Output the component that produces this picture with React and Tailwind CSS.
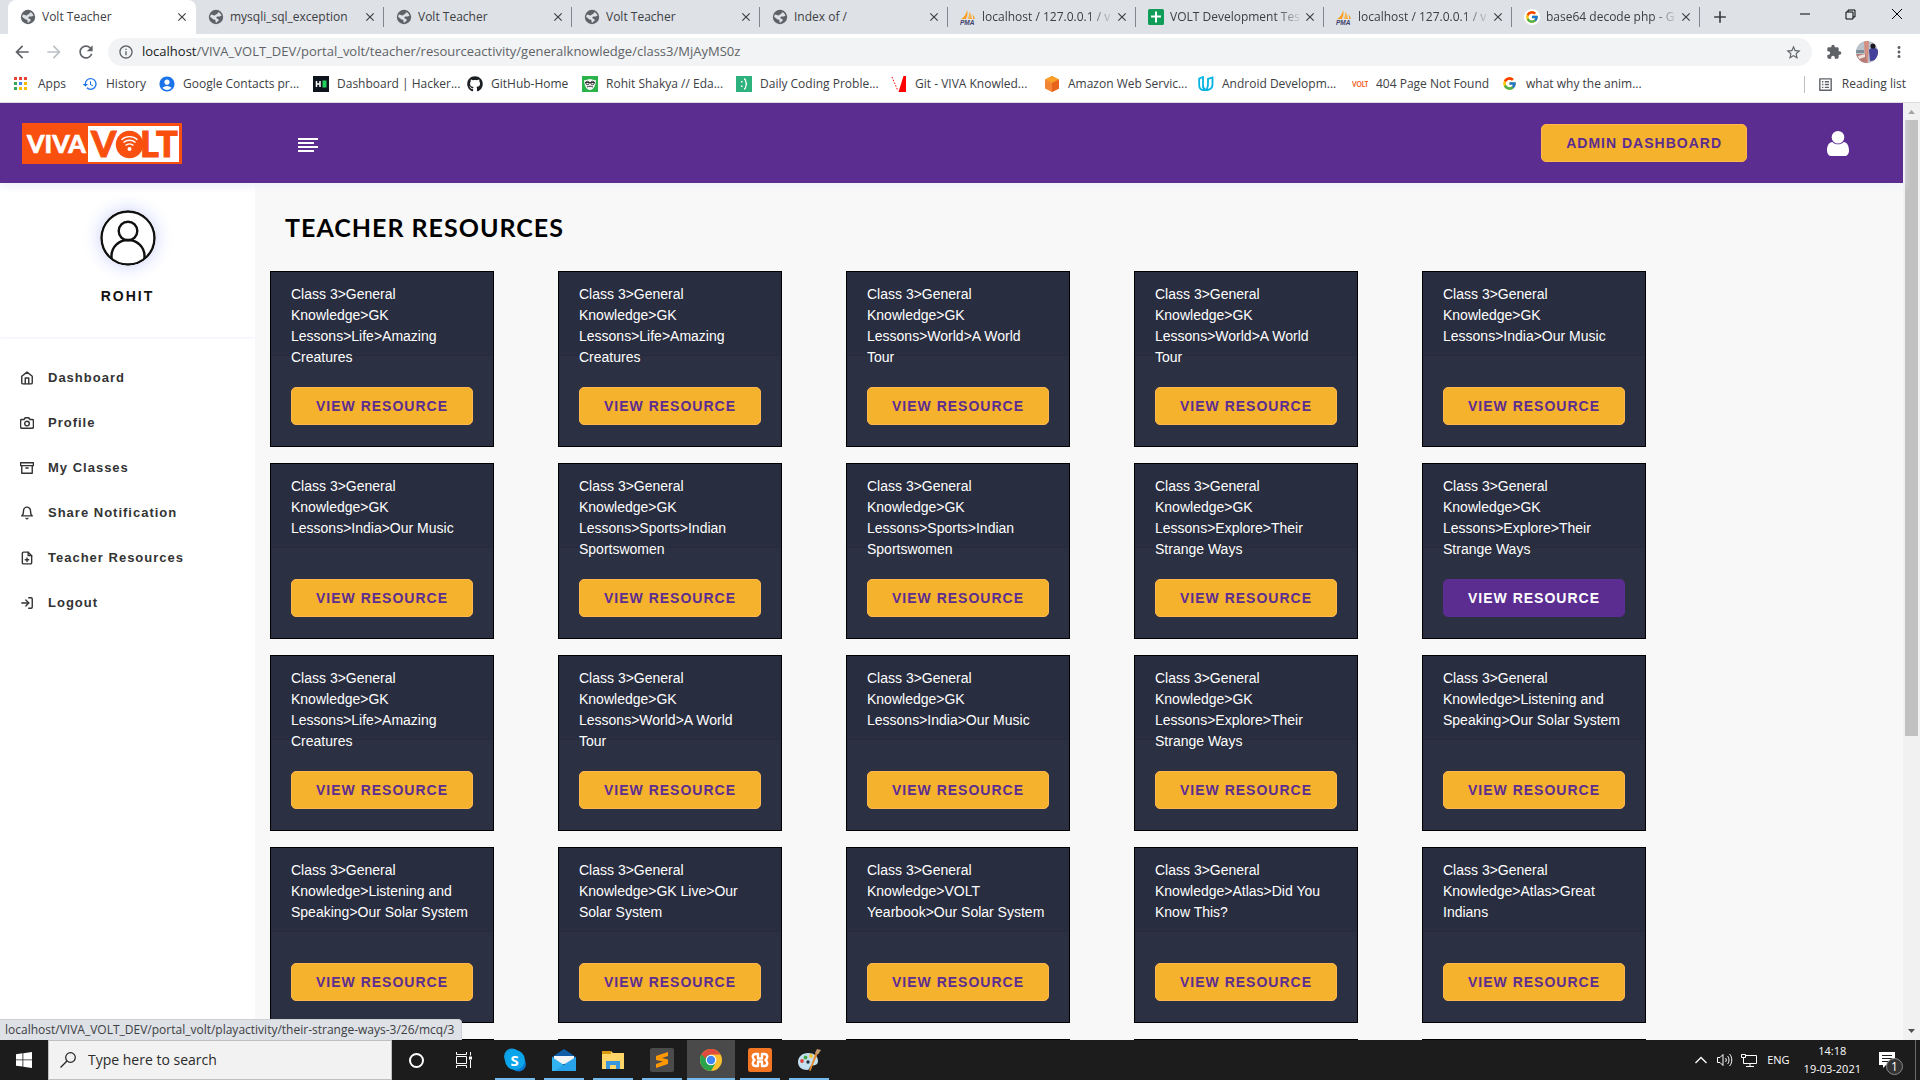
import React from "react";
import {
  MdArrowBack, MdArrowForward, MdRefresh, MdInfoOutline, MdStarBorder, MdExtension,
  MdMoreVert, MdHistory, MdListAlt, MdClose, MdAdd, MdAccountCircle,
} from "react-icons/md";
import { FaGithub } from "react-icons/fa";
import { FcGoogle } from "react-icons/fc";
import { FiHome, FiCamera, FiArchive, FiBell, FiFilePlus, FiLogIn } from "react-icons/fi";

const UI = "font-['Open_Sans','Noto_Sans',sans-serif]";

const Globe = () => (
  <svg viewBox="0 0 16 16" className="size-4 shrink-0">
    <circle cx="8" cy="8" r="7.2" fill="#5f6368" />
    <path d="M3 5.5c1.2-.3 2 .9 3.300.9 1 0 1.200-1 2.200-1.200 1-.2 1-1.600 2-2 1.400.6 2.700 1.900 3 3.600-1 .2-1.800.9-2.900.8-1.200-.2-2.200.2-2.200 1.100 0 1.200 1.600 1 2.200 1.700.5.700-.3 1.700-1.100 2.100-.5.300-.7 1-1.300 1.200-1-.3-.700-1.700-.6-2.500-.9-.7-2.600-.6-3.400-1.600C3.600 8.600 2.200 8.300 2.100 7.400z" fill="#dee1e6" />
  </svg>
);

const Pma = () => (
  <svg viewBox="0 0 16 16" className="size-4 shrink-0">
    <path d="M7 1c1 3 .5 6.500-1.200 9H1C4 8.500 6.300 5 7 1z" fill="#f7a01e" />
    <path d="M9 2.500c2 2.500 3 5 3 7.500H7.500C9 7.500 9.500 5 9 2.500z" fill="#f9b24a" />
    <path d="M12.500 5c1.200 1.600 2 3.200 2.300 5H13c.2-1.700 0-3.300-.5-5z" fill="#f7a01e" />
    <text x="0" y="15.600" fontSize="6.500" fontWeight="700" fontStyle="italic" fontFamily="Liberation Sans, sans-serif" fill="#3c3f6b">PMA</text>
  </svg>
);

const Sheet = () => (
  <svg viewBox="0 0 16 16" className="size-4 shrink-0">
    <rect width="16" height="16" rx="1.500" fill="#0f9d58" />
    <path d="M7 2.500h2v4h4v2H9v5H7v-5H3v-2h4z" fill="#fff" />
  </svg>
);

const GoogleRound = () => (
  <span className="flex size-4 shrink-0 items-center justify-center rounded-full bg-white"><FcGoogle size={14} /></span>
);

const tabs = [
  { title: "Volt Teacher", icon: Globe, active: true },
  { title: "mysqli_sql_exception", icon: Globe },
  { title: "Volt Teacher", icon: Globe },
  { title: "Volt Teacher", icon: Globe },
  { title: "Index of /", icon: Globe },
  { title: "localhost / 127.0.0.1 / v", icon: Pma, fade: true },
  { title: "VOLT Development Tes", icon: Sheet, fade: true },
  { title: "localhost / 127.0.0.1 / v", icon: Pma, fade: true },
  { title: "base64 decode php - G", icon: GoogleRound, fade: true },
];

function TabStrip() {
  return (
    <div className="flex h-[34px] bg-[#dee1e6] pl-2">
      {tabs.map((t, i) => (
        <div key={i} className={"flex min-w-0 basis-[188px] items-center " + (t.active ? "rounded-t-lg bg-white" : "")}>
          <div className="flex min-w-0 flex-1 items-center pr-1.5 pl-3">
            <t.icon />
            <span className={"ml-1.5 flex-1 overflow-hidden text-xs whitespace-nowrap text-[#3c4043] " + (t.fade ? "[mask-image:linear-gradient(to_right,black_80%,transparent)]" : "")}>{t.title}</span>
            <button aria-label="Close tab" className="text-[#3c4043]"><MdClose size={14} /></button>
          </div>
          <span className={"h-5 w-px " + (i > 0 ? "bg-[#80868b]" : "")} />
        </div>
      ))}
      <button aria-label="New tab" className="px-2.5 text-[#3c4043]"><MdAdd size={20} /></button>
      <div className="ml-auto flex text-black">
        {["M1 6h10", "M1 4h7v7H1zM3 4V2h7v7H8", "M1 1l10 10M11 1L1 11"].map((d, i) => (
          <button key={d} aria-label={["Minimise", "Restore", "Close window"][i]} className="flex h-7 w-[46px] items-center justify-center">
            <svg viewBox="0 0 12 12" className="size-3" fill="none" stroke="currentColor"><path d={d} /></svg>
          </button>
        ))}
      </div>
    </div>
  );
}

function AddressBar() {
  return (
    <div className="flex h-9 items-center bg-white text-[#5f6368]">
      <button aria-label="Back" className="ml-3"><MdArrowBack size={20} /></button>
      <button aria-label="Forward" className="ml-3 text-[#bdc1c6]"><MdArrowForward size={20} /></button>
      <button aria-label="Reload" className="ml-3"><MdRefresh size={20} /></button>
      <div className="ml-3 flex h-7 flex-1 items-center rounded-full bg-[#f1f3f4] px-2.5">
        <MdInfoOutline size={16} />
        <span className="ml-2 flex-1 text-[13px] whitespace-nowrap"><span className="text-[#202124]">localhost</span>/VIVA_VOLT_DEV/portal_volt/teacher/resourceactivity/generalknowledge/class3/MjAyMS0z</span>
        <MdStarBorder size={17} />
      </div>
      <button aria-label="Extensions" className="ml-3.5"><MdExtension size={16} /></button>
      <svg viewBox="0 0 22 22" className="ml-3.5 size-[22px]" role="img" aria-label="Account">
        <defs><clipPath id="face"><circle cx="11" cy="11" r="11" /></clipPath></defs>
        <g clipPath="url(#face)">
          <rect width="22" height="22" fill="#b9c3cb" />
          <path d="M8 0h5l-1 22H9z" fill="#d58f80" />
          <path d="M0 9h8v3H0z" fill="#7f8d96" />
          <path d="M0 13h10l1 9H0z" fill="#b77c78" />
          <path d="M2 15l7-2v3l-6 2z" fill="#eee5e0" />
          <path d="M13 9c2-3 6-3 9 0v10l-8 1z" fill="#45409a" />
          <circle cx="17" cy="5" r="2.600" fill="#1d1720" />
        </g>
      </svg>
      <button aria-label="Menu" className="mr-3 ml-3"><MdMoreVert size={18} /></button>
    </div>
  );
}

const AppsGrid = () => (
  <svg viewBox="0 0 14 14" className="size-3.5">
    {["#ea4335", "#ea4335", "#ea4335", "#34a853", "#4285f4", "#fbbc04", "#34a853", "#fbbc04", "#fbbc04"].map((c, i) => (
      <rect key={i} x={(i % 3) * 5} y={Math.floor(i / 3) * 5 + 1} width="3" height="3" fill={c} />
    ))}
  </svg>
);

const bookmarks = [
  { t: "Apps", w: "w-[68px]", i: <AppsGrid /> },
  { t: "History", w: "w-[77px]", i: <MdHistory size={16} className="text-[#1a73e8]" /> },
  { t: "Google Contacts pr...", w: "w-[154px]", i: <MdAccountCircle size={18} className="-m-px text-[#1a73e8]" /> },
  { t: "Dashboard | Hacker...", w: "w-[154px]", i: (
    <svg viewBox="0 0 16 16"><path fill="#0e141e" d="M0 0h16v16H0z" /><path d="M3.500 5v6M7 5v6M3.500 8H7" stroke="#fff" strokeWidth="1.500" /><path fill="#1fd35c" d="M9.500 4.500h4v7h-4z" /></svg>) },
  { t: "GitHub-Home", w: "w-[115px]", i: <FaGithub size={16} className="text-[#1b1f23]" /> },
  { t: "Rohit Shakya // Eda...", w: "w-[154px]", i: (
    <svg viewBox="0 0 16 16"><path fill="#2bb34b" d="M0 0h16v16H0z" /><path d="M2 4c2 1 3-1 6-1s4 2 6 1c0 4-2 10-6 10S2 8 2 4z" fill="#f4f4f4" /><path d="M3 6.500h10" stroke="#333" /><circle cx="5.500" cy="7" r="1.700" fill="none" stroke="#333" /><circle cx="10.500" cy="7" r="1.700" fill="none" stroke="#333" /><path d="M5 11c2-1 4-1 6 0" stroke="#333" fill="none" /></svg>) },
  { t: "Daily Coding Proble...", w: "w-[155px]", i: (
    <svg viewBox="0 0 16 16"><path fill="#2db27e" d="M0 0h16v16H0z" /><path d="M8 3c3 0 .5 4.500 3 5-2.500.5 0 5-3 5" fill="none" stroke="#fff" strokeWidth="1.300" /><path fill="#fff" d="M5 5h1.500v1.500H5zM5 9.500h1.500V11H5z" /></svg>) },
  { t: "Git - VIVA Knowled...", w: "w-[153px]", i: (
    <svg viewBox="0 0 16 16"><path d="M1 1l6 14" stroke="#f00" strokeDasharray="1.500 1.500" /><path d="M12.500 0H15v16H7.500z" fill="#f00" /></svg>) },
  { t: "Amazon Web Servic...", w: "w-[154px]", i: (
    <svg viewBox="0 0 16 16"><path d="M8 0l7 3.500v9L8 16l-7-3.500v-9z" fill="#f58536" /><path d="M8 0l7 3.500L8 7 1 3.500z" fill="#fa9f2a" /><path d="M8 7l7-3.500v9L8 16z" fill="#e8641b" /></svg>) },
  { t: "Android Developm...", w: "w-[154px]", i: (
    <svg viewBox="0 0 16 16" fill="none" stroke="#02b3e4" strokeWidth="1.800"><path d="M1.200 2.500L5 1v8.500c0 2 .8 3.500 2 4.500-3.500.5-5.800-1-5.800-4.500z" /><path d="M5 9.500c0 3 2 5 4.500 4.500 3-.6 5-2 5-5.500V1.500L10 3v5c0 3-.5 5-3 6" /></svg>) },
  { t: "404 Page Not Found", w: "w-[150px]", i: (
    <svg viewBox="0 0 16 16"><text x="0" y="10.500" fontSize="6.500" fontWeight="900" fontFamily="Lato, sans-serif" fill="#f4662a">VOLT</text></svg>) },
  { t: "what why the anim...", w: "w-[150px]", i: <FcGoogle size={15} /> },
];

function Bookmarks() {
  return (
    <nav aria-label="Bookmarks" className="flex h-[33px] items-center border-b border-[#dadce0] bg-white pb-1 pl-3.5 text-xs text-[#3c4043]">
      {bookmarks.map((b) => (
        <a key={b.t} href="#" className={"flex shrink-0 items-center gap-2 whitespace-nowrap " + b.w}>
          <span className="size-4 shrink-0 [&>svg]:max-w-none">{b.i}</span>
          {b.t}
        </a>
      ))}
      <button className="mr-3.5 ml-auto flex items-center gap-2 border-l border-[#bdc1c6] pl-3 whitespace-nowrap">
        <MdListAlt size={17} className="text-[#5f6368]" />
        Reading list
      </button>
    </nav>
  );
}

const Logo = () => (
  <svg viewBox="0 0 160 41" className="h-[41px] w-40" role="img" aria-label="Viva Volt">
    <rect width="160" height="41" fill="#f95010" />
    <rect x="66" y="3" width="91" height="36" fill="#fff" />
    <g fontFamily="Lato, sans-serif" fontWeight="900">
      <text x="5" y="30" fontSize="25" fill="#fff" stroke="#fff" strokeWidth=".6">VIVA</text>
      <g fontSize="36" fill="#f95010" stroke="#f95010">
        <text x="69" y="34">V</text>
        <text x="118" y="34">L</text>
        <text x="134" y="34">T</text>
      </g>
    </g>
    <circle cx="107.500" cy="21.500" r="13.700" fill="#f95010" />
    <circle cx="107.500" cy="26" r="2" fill="#fff" />
    <path d="M103.500 22.500a6 6 0 0 1 8 0M101.500 19.500a9 9 0 0 1 12 0M99.500 16.700a12 12 0 0 1 16 0" fill="none" stroke="#fff" strokeWidth="1.400" />
  </svg>
);

function Header() {
  return (
    <header className="z-10 flex h-20 shrink-0 items-center bg-[#5c2d91] shadow-[0_4px_8px_#eef1f9]">
      <div className="w-[298px] pl-[22px]"><Logo /></div>
      <button aria-label="Toggle menu" className="mt-1 flex flex-col gap-0.5">
        <span className="h-0.5 w-5 bg-white" /><span className="h-0.5 w-4 bg-white" />
        <span className="h-0.5 w-5 bg-white" /><span className="h-0.5 w-4 bg-white" />
      </button>
      <button className="mr-20 ml-auto h-[38px] rounded-[5px] border border-[#ffb84d] bg-[#f5b22c] px-6 text-sm font-bold tracking-[1px] text-[#5c2d91]">ADMIN DASHBOARD</button>
      <button aria-label="Account" className="mr-[54px]">
        <svg viewBox="0 0 22 25" className="h-[25px] w-[22px]" fill="#fff">
          <path d="M5.300 11C2 11.500 0 14.500 0 19.500 0 23 1.800 25 4.500 25h13c2.700 0 4.500-2 4.500-5.500 0-5-2-8-5.300-8.500-1.500 1.500-3.400 2.300-5.700 2.300S6.800 12.500 5.300 11z" />
          <circle cx="11" cy="6.300" r="6.300" />
        </svg>
      </button>
    </header>
  );
}

const menu = [
  [FiHome, "Dashboard"], [FiCamera, "Profile"], [FiArchive, "My Classes"],
  [FiBell, "Share Notification"], [FiFilePlus, "Teacher Resources"], [FiLogIn, "Logout"],
];

function Sidebar() {
  return (
    <aside className="w-[255px] shrink-0 bg-white shadow-[4px_0_8px_#eef1f9]">
      <div className="flex h-[154px] flex-col items-center pt-[27px] shadow-[0_1px_3px_#eef1f9]">
        <svg viewBox="0 0 56 56" className="size-14 rounded-full bg-white shadow-[0_0_18px_#c9cffb]" fill="none" stroke="#111" strokeWidth="2.400">
          <circle cx="28" cy="28" r="26.500" />
          <circle cx="28" cy="21" r="9.300" />
          <path d="M11.500 48.500V46c0-9 7.300-16 16.500-16s16.500 7 16.500 16v2.500" />
        </svg>
        <p className="mt-5 text-sm font-bold tracking-[2px] text-[#111]">ROHIT</p>
      </div>
      <nav className="mt-[18px] text-[13px] font-bold tracking-[1px] text-[#333]">
        {menu.map(([Icon, label]) => (
          <a key={label} href="#" className="flex h-[45px] items-center gap-3.5 pl-5">
            <Icon size={14} strokeWidth={2.400} />
            {label}
          </a>
        ))}
      </nav>
    </aside>
  );
}

const G = "Class 3>General Knowledge>";
const cards = [
  "GK Lessons>Life>Amazing Creatures", "GK Lessons>Life>Amazing Creatures", "GK Lessons>World>A World Tour", "GK Lessons>World>A World Tour", "GK Lessons>India>Our Music",
  "GK Lessons>India>Our Music", "GK Lessons>Sports>Indian Sportswomen", "GK Lessons>Sports>Indian Sportswomen", "GK Lessons>Explore>Their Strange Ways", "GK Lessons>Explore>Their Strange Ways",
  "GK Lessons>Life>Amazing Creatures", "GK Lessons>World>A World Tour", "GK Lessons>India>Our Music", "GK Lessons>Explore>Their Strange Ways", "Listening and Speaking>Our Solar System",
  "Listening and Speaking>Our Solar System", "GK Live>Our Solar System", "VOLT Yearbook>Our Solar System", "Atlas>Did You Know This?", "Atlas>Great Indians",
  "Atlas>Great Indians", "Atlas>Great Indians", "Atlas>Great Indians", "Atlas>Great Indians", "Atlas>Great Indians",
];

function Card({ text, active }) {
  return (
    <article className="flex h-44 w-56 flex-col border border-black bg-[#2b3042]">
      <h2 className="h-[84px] border-b border-[#262a3a] bg-[#292d40] px-5 pt-3 text-sm leading-[21px] text-white">{text}</h2>
      <div className="px-5 pt-[31px]">
        <button className={"h-[38px] w-full rounded-[5px] border text-sm font-bold tracking-[1px] " + (active ? "border-[#5c2d91] bg-[#5c2d91] text-white" : "border-[#ffb84d] bg-[#f5b22c] text-[#5c2d91]")}>VIEW RESOURCE</button>
      </div>
    </article>
  );
}

function Page() {
  return (
    <div className="relative flex min-h-0 flex-1 overflow-hidden font-['Liberation_Sans',Arial,sans-serif]">
      <div className="flex min-w-0 flex-1 flex-col">
        <Header />
        <div className="flex min-h-0 flex-1">
          <Sidebar />
          <main className="min-w-0 flex-1 overflow-hidden bg-[#f8f8f8] px-[15px]">
            <h1 className="mt-7 mb-7 pl-[15px] text-[25px] leading-8 font-bold tracking-[1px] text-black font-['Lato',sans-serif]">TEACHER RESOURCES</h1>
            <div className="flex flex-wrap gap-x-16 gap-y-4">
              {cards.map((c, i) => <Card key={i} text={G + c} active={i === 9} />)}
            </div>
          </main>
        </div>
      </div>
      <div className="flex w-[17px] flex-col items-center bg-[#f1f1f1]" aria-hidden="true">
        <svg viewBox="0 0 17 17" className="size-[17px] shrink-0"><path d="M5 11l3.500-4 3.500 4z" fill="#a3a3a3" /></svg>
        <div className="h-[616px] w-[13px] bg-[#c1c1c1]" />
        <svg viewBox="0 0 17 17" className="mt-auto size-[17px] shrink-0"><path d="M5 6l3.500 4L12 6z" fill="#505050" /></svg>
      </div>
      <div className="absolute bottom-0 left-0 z-20 flex h-[21px] items-center rounded-tr border-t border-r border-[#ced1d6] bg-[#dee1e6] pr-[7px] pl-[5px] text-xs whitespace-nowrap text-[#3c4043] font-['Open_Sans',sans-serif]">
        localhost/VIVA_VOLT_DEV/portal_volt/playactivity/their-strange-ways-3/26/mcq/3
      </div>
    </div>
  );
}

const taskApps = [
  { n: "Skype", d: <><circle cx="9" cy="8.500" r="8" fill="#0c9fe4" /><circle cx="15.500" cy="16" r="7.500" fill="#0a78d0" /><circle cx="12" cy="12" r="10" fill="#0aa5ea" /><text x="7.500" y="17.500" fontSize="15" fontWeight="700" fontFamily="Open Sans, sans-serif" fill="#fff">S</text></> },
  { n: "Mail", d: <><path d="M0 9L12 1l12 8v4H0z" fill="#0f5ca8" /><path d="M2 8h20v8H2z" fill="#f4f4f4" /><path d="M0 9l12 8 12-8v14H0z" fill="#32b4f0" /><path d="M12 16l12-7v14H3z" fill="#1d8fe0" opacity=".5" /></> },
  { n: "File Explorer", d: <><path d="M1 3h9l2 2h11v16H1z" fill="#ffd667" /><path d="M1 3h9v3H1z" fill="#d99a10" /><path d="M5 13h14v8h-4v-4H9v4H5z" fill="#3a96dd" /></> },
  { n: "Sublime Text", d: <><rect width="24" height="24" rx="2" fill="#4b4b4b" /><path d="M18 4L6 8v4l7 1.500L6 16v4l12-4v-4.500L12 10l6-2z" fill="#ff9800" /></> },
  { n: "Chrome", active: true, d: <><circle cx="12" cy="12" r="11" fill="#fbc02d" /><path d="M2.500 6.500A11 11 0 0 0 12 23l4.500-8L12 12z" fill="#2ba24c" /><path d="M2.500 6.500L7.300 14.500 12 12V6.500z" fill="#2ba24c" /><path d="M2.500 6.500A11 11 0 0 1 21.500 6.500H12a5.500 5.500 0 0 0-5.300 4z" fill="#e04a3f" /><circle cx="12" cy="12" r="5.300" fill="#fff" /><circle cx="12" cy="12" r="4.200" fill="#4285f4" /></> },
  { n: "XAMPP", d: <><rect width="24" height="24" rx="2.500" fill="#f37623" /><path d="M10 6H8C4 6 4 10 6.500 12 4 14 4 18 8 18h2v-4.500h4V18h2c4 0 4-4 1.500-6C20 10 20 6 16 6h-2v4.500h-4z" fill="none" stroke="#fff" strokeWidth="2.400" strokeLinejoin="round" /></> },
  { n: "Paint", d: <><path d="M11 5C5 5 1 9 1 14s4 8 9 8c3 0 2-3 4-4s7 0 7-5-4-8-10-8z" fill="#c3dff0" /><circle cx="5" cy="13" r="1.900" fill="#e2453c" /><circle cx="8.500" cy="9.500" r="1.900" fill="#45a849" /><circle cx="14" cy="8" r="1.900" fill="#f3c330" /><circle cx="11" cy="14" r="1.700" fill="#24303a" /><path d="M18.500 5l2 1-7 17-1.500-.5z" fill="#e88b2b" /><path d="M18 5l2-4 4 1-3 4.500z" fill="#c79c6c" /></> },
];

function Taskbar() {
  return (
    <footer className="flex h-10 shrink-0 bg-[#1c1c1c] text-white">
      <button aria-label="Start" className="flex w-12 items-center justify-center">
        <svg viewBox="0 0 16 16" className="size-4" fill="#fff"><path d="M0 2.200L6.500 1.300v6.200H0zM7.300 1.200L16 0v7.500H7.300zM0 8.300h6.500v6.300L0 13.700zM7.300 8.300H16V16l-8.700-1.200z" /></svg>
      </button>
      <label className="flex w-[344px] items-center gap-3 border border-[#bfbfbf] bg-[#f2f2f2] pl-[11px]">
        <svg viewBox="0 0 16 16" className="size-4 shrink-0" fill="none" stroke="#222" strokeWidth="1.200"><circle cx="10.500" cy="5.500" r="4.800" /><path d="M7 9L.5 15.500" /></svg>
        <input aria-label="Search" placeholder="Type here to search" className="w-full bg-transparent text-sm text-[#222] outline-none placeholder:text-[#2b2b2b]" />
      </label>
      <button aria-label="Cortana" className="flex w-12 items-center justify-center"><span className="size-[15px] rounded-full border-2 border-white" /></button>
      <button aria-label="Task view" className="mr-[3px] flex w-12 items-center justify-center">
        <svg viewBox="0 0 16 16" className="size-4" fill="none" stroke="#fff"><path d="M.5 4.500h10v7H.5zM.5 0v2.500h10V0M.5 16v-2.500h10V16M14.500 0v3.500M14.500 8v8" /><path d="M13 4.500h3v3h-3z" fill="#fff" stroke="none" /></svg>
      </button>
      {taskApps.map((a) => (
        <button key={a.n} aria-label={a.n} className={"mr-px flex w-12 flex-col items-center justify-end " + (a.active ? "bg-[#4a4a4a]" : "")}>
          <svg viewBox="0 0 24 24" className="mb-1.5 size-6">{a.d}</svg>
          <span className={"h-0.5 bg-[#76b9ed] " + (a.active ? "w-12" : "w-10")} />
        </button>
      ))}
      <div className="ml-auto flex items-center text-[11px]">
        <svg viewBox="0 0 12 8" className="mr-2.5 h-2 w-3" fill="none" stroke="#fff" strokeWidth="1.300"><path d="M.5 7L6 1.500 11.500 7" /></svg>
        <svg viewBox="0 0 16 16" className="mr-2 size-4" fill="none" stroke="#fff"><path d="M.5 5.500h2.500L6 2.500v11L3 10.500H.5zM8.500 6c1 1 1 3 0 4M10.500 4c2 2 2 6 0 8M12.500 2c3 3 3 9 0 12" /></svg>
        <svg viewBox="0 0 16 16" className="mr-2.5 size-4" fill="none" stroke="#fff"><path d="M5 3.500h10.500v8H2.500V7M9 11.500v3M5 14.500h8M.5 2.500h4v3h-4zM2.500 5v2" /></svg>
        <span className="mr-3.5">ENG</span>
        <div className="text-center leading-[18px]"><div>14:18</div><div>19-03-2021</div></div>
        <button aria-label="Notifications, 1 new" className="relative mr-5 ml-[18px]">
          <svg viewBox="0 0 16 16" className="size-4"><path d="M0 0h16v13H7l-3 3v-3H0z" fill="#fff" /><path d="M3 3.500h10M3 6.500h10M3 9.500h6" stroke="#1c1c1c" /></svg>
          <span className="absolute top-1.5 left-[7px] flex size-[17px] items-center justify-center rounded-full border border-[#8a8a8a] bg-[#333] text-xs">1</span>
        </button>
        <span className="mr-1 h-10 w-px bg-[#6b6b6b]" />
      </div>
    </footer>
  );
}

export default function App() {
  return (
    <div className={"flex h-screen flex-col overflow-hidden " + UI}>
      <TabStrip />
      <AddressBar />
      <Bookmarks />
      <Page />
      <Taskbar />
    </div>
  );
}
